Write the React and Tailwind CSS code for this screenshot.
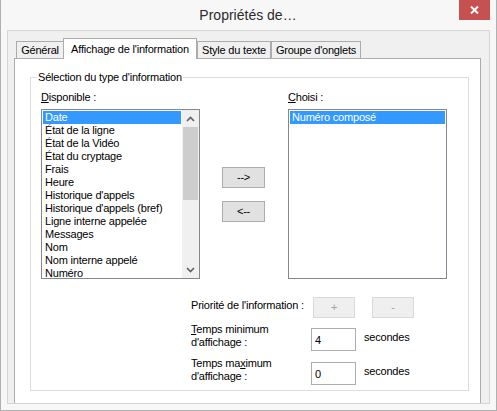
import React from "react";

const available = [
  "Date",
  "État de la ligne",
  "État de la Vidéo",
  "État du cryptage",
  "Frais",
  "Heure",
  "Historique d'appels",
  "Historique d'appels (bref)",
  "Ligne interne appelée",
  "Messages",
  "Nom",
  "Nom interne appelé",
  "Numéro",
];

const chosen = ["Numéro composé"];

const tabs = [
  { label: "Général", w: "w-[47px]", edge: "border-l border-t" },
  { label: "Affichage de l'information", active: true },
  { label: "Style du texte", w: "w-[74px]", edge: "border-l border-r border-t" },
  { label: "Groupe d'onglets", w: "w-[90px]", edge: "border-l border-r border-t" },
];

const ScrollBar = () => (
  <div className="flex w-[17px] flex-col bg-[#f0f0f0]">
    <div className="flex h-[17px] items-center justify-center">
      <svg width="9" height="6" viewBox="0 0 9 6">
        <path d="M1 5 L4.5 1.5 L8 5" fill="none" stroke="#606060" strokeWidth="1.6" />
      </svg>
    </div>
    <div className="flex-1">
      <div className="mx-px h-[73px] bg-[#cdcdcd]" />
    </div>
    <div className="flex h-[17px] items-center justify-center">
      <svg width="9" height="6" viewBox="0 0 9 6">
        <path d="M1 1 L4.5 4.5 L8 1" fill="none" stroke="#606060" strokeWidth="1.6" />
      </svg>
    </div>
  </div>
);

const ListBox = ({ items, scroll }) => (
  <div className="flex h-[170px] w-[159px] border border-[#828790] bg-white">
    <ul className="flex-1 overflow-hidden px-px pt-px">
      {items.map((item, i) => (
        <li
          key={item}
          className={
            i === 0
              ? "h-[13px] whitespace-nowrap bg-[#3399ff] pl-[2px] leading-[13px] text-white"
              : "h-[13px] whitespace-nowrap pl-[2px] leading-[13px]"
          }
        >
          {item}
        </li>
      ))}
    </ul>
    {scroll && <ScrollBar />}
  </div>
);

const MoveButton = ({ children }) => (
  <button className="h-[21px] w-[43px] border border-[#adadad] bg-[#e1e1e1] leading-none">
    {children}
  </button>
);

const DisabledButton = ({ children }) => (
  <button className="h-[21px] w-[42px] border border-[#d9d9d9] bg-[#efefef] leading-none text-[#a0a0a0]">
    {children}
  </button>
);

const Seconds = ({ label, value }) => (
  <div className="flex items-start">
    <div className="w-[120px] leading-[13px]">{label}</div>
    <input
      readOnly
      value={value}
      className="mt-[5px] h-[23px] w-[45px] border border-[#abadb3] bg-white pl-[3px] outline-none"
    />
    <span className="ml-[8px] mt-[8px] leading-[13px]">secondes</span>
  </div>
);

export default function App() {
  return (
    <div className="flex h-[411px] w-[497px] flex-col border-x border-b border-[#b0b0b0] bg-[#f7f7f7] font-['Liberation_Sans',Arial,sans-serif] text-[11px] tracking-[-0.2px] text-black">
      {/* title bar */}
      <div className="flex h-[30px] shrink-0 items-start">
        <div className="flex h-[30px] flex-1 items-center justify-center pl-[36px] text-[14px] tracking-normal text-[#2b2b2b]">
          Propriétés de…
        </div>
        <div className="mr-[6px] flex h-[20px] w-[31px] items-center justify-center bg-[#c75050]">
          <svg width="9" height="8" viewBox="0 0 9 8">
            <path d="M1 0.5 L8 7.5 M8 0.5 L1 7.5" stroke="#fff" strokeWidth="2" />
          </svg>
        </div>
      </div>

      {/* client area */}
      <div className="mx-[6px] mb-[6px] flex flex-1 flex-col border border-[#d5d5d5] bg-[#f0f0f0]">
        <div className="ml-[8px] flex h-[27px] shrink-0 items-end">
          {tabs.map((t) =>
            t.active ? (
              <div
                key={t.label}
                className="relative z-10 -mb-px flex h-[21px] w-[134px] items-center justify-center border-x border-t border-[#acacac] bg-white"
              >
                {t.label}
              </div>
            ) : (
              <div
                key={t.label}
                className={`flex h-[17px] ${t.w} items-center justify-center ${t.edge} border-[#acacac] bg-[#f0f0f0]`}
              >
                {t.label}
              </div>
            )
          )}
        </div>

        <div className="ml-[6px] mr-[8px] flex-1 border-x border-t border-[#acacac] bg-white">
          <fieldset className="ml-[15px] mr-[11px] mt-[12px] border border-[#dcdcdc] pb-[5px]">
            <legend className="ml-[6px] px-px leading-[13px]">Sélection du type d'information</legend>

            <div className="flex pl-[10px] pt-[7px]">
              <div>
                <div className="h-[13px] leading-[13px]">
                  <u>D</u>isponible :
                </div>
                <div className="mt-[5px]">
                  <ListBox items={available} scroll />
                </div>
              </div>

              <div className="ml-[22px] flex flex-col gap-[13px] pt-[76px]">
                <MoveButton>{"-->"}</MoveButton>
                <MoveButton>{"<--"}</MoveButton>
              </div>

              <div className="ml-[23px]">
                <div className="h-[13px] leading-[13px]">
                  <u>C</u>hoisi :
                </div>
                <div className="mt-[5px]">
                  <ListBox items={chosen} />
                </div>
              </div>
            </div>

            <div className="ml-[160px] mt-[18px] flex flex-col">
              <div className="flex items-start">
                <div className="mt-[2px] w-[122px] leading-[13px]">Priorité de l'information :</div>
                <DisabledButton>+</DisabledButton>
                <div className="ml-[17px]">
                  <DisabledButton>-</DisabledButton>
                </div>
              </div>
              <div className="mt-[5px]">
                <Seconds
                  value="4"
                  label={
                    <>
                      <u>T</u>emps minimum
                      <br />
                      d'affichage :
                    </>
                  }
                />
              </div>
              <div className="mt-[6px]">
                <Seconds
                  value="0"
                  label={
                    <>
                      Temps ma<u>x</u>imum
                      <br />
                      d'affichage :
                    </>
                  }
                />
              </div>
            </div>
          </fieldset>
        </div>
      </div>
    </div>
  );
}
